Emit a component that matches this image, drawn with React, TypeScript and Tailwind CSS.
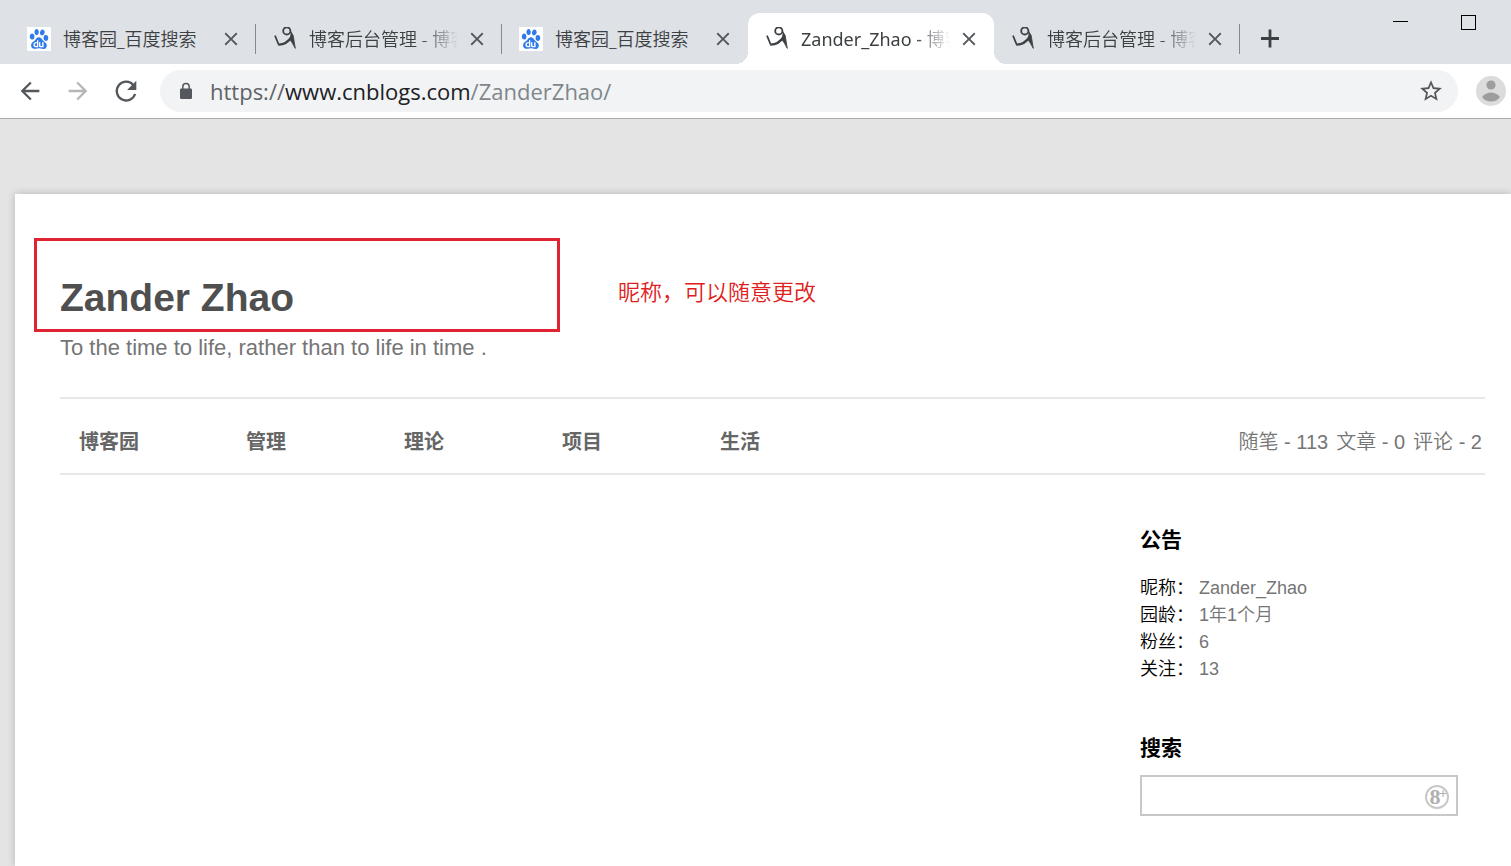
import { MdArrowBack, MdArrowForward, MdClose, MdStarBorder } from "react-icons/md";
import { SiBaidu } from "react-icons/si";

type Tab = { id: number; title: string; site: "baidu" | "cnblogs"; active?: boolean; divider?: boolean };

const tabs: Tab[] = [
  { id: 1, title: "博客园_百度搜索", site: "baidu", divider: true },
  { id: 2, title: "博客后台管理 - 博客园", site: "cnblogs", divider: true },
  { id: 3, title: "博客园_百度搜索", site: "baidu" },
  { id: 4, title: "Zander_Zhao - 博客园", site: "cnblogs", active: true },
  { id: 5, title: "博客后台管理 - 博客园", site: "cnblogs", divider: true },
];

const navLinks = ["博客园", "管理", "理论", "项目", "生活"];

const profile = [
  { label: "昵称", value: "Zander_Zhao" },
  { label: "园龄", value: "1年1个月" },
  { label: "粉丝", value: "6" },
  { label: "关注", value: "13" },
];

function BaiduIcon() {
  return (
    <span className="flex size-6 shrink-0 items-center justify-center bg-white text-[#2f7bea]">
      <SiBaidu className="size-5" />
    </span>
  );
}

function CnblogsIcon() {
  return (
    <svg viewBox="-1 0 24 24" className="size-6 shrink-0" fill="none" stroke="#3c4043" aria-hidden="true">
      <circle cx="12.800" cy="3.900" r="3.600" strokeWidth="1.800" />
      <path d="M1 8.600 4.600 17.400" strokeWidth="1.700" />
      <path d="M4.200 17.600C9.500 17.800 13.500 16 17.600 10" strokeWidth="2.300" />
      <path d="M16.400 4C17.200 6 17 7.500 16.600 9.400L16 12.600 18.600 16.600 21.300 21.400 19.200 8.400Z" fill="#3c4043" strokeWidth="0.800" />
    </svg>
  );
}

function BrowserTab({ tab }: { tab: Tab }) {
  return (
    <div
      className={
        tab.active
          ? "relative flex h-[51px] w-[246px] shrink-0 items-center rounded-t-xl bg-white pr-[14px] pl-[17px] font-normal"
          : "relative flex h-[51px] w-[246px] shrink-0 items-center pr-[14px] pl-[17px] font-[350]"
      }
    >
      {tab.active && (
        <>
          <span className="absolute bottom-0 -left-3 size-3 bg-[radial-gradient(circle_at_top_left,transparent_12px,white_12px)]" />
          <span className="absolute -right-3 bottom-0 size-3 bg-[radial-gradient(circle_at_top_right,transparent_12px,white_12px)]" />
        </>
      )}
      {tab.site === "baidu" ? <BaiduIcon /> : <CnblogsIcon />}
      <span className="ml-3 min-w-0 flex-1 overflow-hidden text-lg whitespace-nowrap text-[#3c4043]">
        <span className={tab.site === "baidu" ? "block" : "block overflow-hidden [mask-image:linear-gradient(to_right,black_76%,transparent)]"}>
          {tab.title}
        </span>
      </span>
      <button type="button" aria-label="关闭标签页" className="ml-2 flex size-[22px] items-center justify-center text-[#54585c]">
        <MdClose className="size-[22px]" />
      </button>
      {tab.divider && <span className="absolute right-0 h-[30px] w-px bg-[#85898d]" />}
    </div>
  );
}

function TitleBar() {
  return (
    <div className="flex h-16 items-end overflow-hidden bg-[#dee1e6] pl-[10px]">
      {tabs.map((tab) => (
        <BrowserTab key={tab.id} tab={tab} />
      ))}
      <button type="button" aria-label="新标签页" className="ml-[14px] flex h-[51px] w-8 items-center justify-center text-[#3c4043]">
        <svg viewBox="0 0 28 28" className="size-7" aria-hidden="true">
          <path d="M5 13.500H23M14 4.500V22.500" stroke="currentColor" strokeWidth="2.800" />
        </svg>
      </button>
      <div className="ml-auto flex self-start pt-[14px] pr-[35px]">
        <button type="button" aria-label="最小化" className="mr-[53px] flex h-[15px] w-[15px] items-center">
          <span className="h-px w-full bg-black" />
        </button>
        <button type="button" aria-label="最大化" className="mt-px size-[15px] border border-black" />
      </div>
    </div>
  );
}

function Toolbar() {
  return (
    <div className="flex h-[55px] items-center border-b border-[#a9adab] bg-white pl-4 text-[#54585c]">
      <button type="button" aria-label="后退">
        <MdArrowBack className="size-7" />
      </button>
      <button type="button" aria-label="前进" className="ml-5 text-[#b4b6b8]">
        <MdArrowForward className="size-7" />
      </button>
      <button type="button" aria-label="重新加载" className="ml-5">
        <svg viewBox="0 0 28 28" className="size-7" aria-hidden="true">
          <path d="M21.500 8.200A9.400 9.400 0 1 0 23.100 17" fill="none" stroke="currentColor" strokeWidth="2.300" />
          <path d="M24.300 3.800V13H15.100Z" fill="currentColor" />
        </svg>
      </button>
      <div className="ml-5 flex h-[42px] flex-1 items-center rounded-full bg-[#f1f3f4] pr-[14px] pl-4">
        <svg viewBox="0 0 20 20" className="size-5" aria-hidden="true">
          <rect x="4" y="7.500" width="12" height="10.500" rx="1.200" fill="currentColor" />
          <path d="M6.800 8V5.700a3.200 3.200 0 0 1 6.400 0V8" fill="none" stroke="currentColor" strokeWidth="1.500" />
        </svg>
        <a
          href="https://www.cnblogs.com/ZanderZhao/"
          className="ml-[14px] flex-1 font-['Open_Sans',sans-serif] text-[22px] leading-7 font-normal text-[#80868b]"
        >
          <span className="text-[#5f6368]">https://</span>
          <span className="text-[#202124]">www.cnblogs.com</span>/ZanderZhao/
        </a>
        <button type="button" aria-label="为此网页添加书签">
          <MdStarBorder className="size-[26px]" />
        </button>
      </div>
      <button type="button" aria-label="用户" className="mr-[5px] ml-[18px]">
        <svg viewBox="0 0 30 30" className="size-[30px]">
          <circle cx="15" cy="15" r="15" fill="#dcdcdc" />
          <circle cx="15" cy="9" r="4.6" fill="#9d9d9d" />
          <path d="M6 21C8 18 12 16.4 15 16.4S22 18 24 21C22 24.2 18.500 25.600 15 25.600S8 24.200 6 21Z" fill="#9d9d9d" />
        </svg>
      </button>
    </div>
  );
}

function BlogHeader() {
  return (
    <header className="relative pt-20 pb-[33px]">
      <h1 className="text-[39px] leading-[47px] font-bold text-[#4f4f4f]">Zander Zhao</h1>
      <p className="mt-[11px] text-[22px] leading-8 text-[#757575]">To the time to life, rather than to life in time .</p>
      <div className="absolute top-11 -left-[26px] h-[94px] w-[526px] border-3 border-[#e02333]" />
      <p className="absolute top-[83px] left-[558px] text-[22px] leading-8 text-[#e02020]">昵称，可以随意更改</p>
    </header>
  );
}

function BlogNav() {
  return (
    <nav className="flex h-[78px] items-center justify-between border-y-2 border-[#e8e8e8] pt-3 pr-[3px] pl-[19px] text-xl text-[#757575]">
      <ul className="flex font-bold text-[#666]">
        {navLinks.map((link) => (
          <li key={link} className="w-[158px] first:w-[167px]">
            <a href="#">{link}</a>
          </li>
        ))}
      </ul>
      <div className="flex gap-2">
        <span>随笔 - 113</span>
        <span>文章 - 0</span>
        <span>评论 - 2</span>
      </div>
    </nav>
  );
}

function Sidebar() {
  return (
    <aside className="mr-[27px] ml-auto w-[318px] pt-[49px]">
      <section>
        <h2 className="text-[21px] leading-8 font-bold text-black">公告</h2>
        <dl className="mt-[19px] text-lg leading-[27px]">
          {profile.map((row) => (
            <div key={row.label} className="flex gap-[5px]">
              <dt className="text-black">{row.label}：</dt>
              <dd className="text-[#757575]">
                <a href="#">{row.value}</a>
              </dd>
            </div>
          ))}
        </dl>
      </section>
      <section className="mt-[49px]">
        <h2 className="text-[21px] leading-8 font-bold text-black">
          <label htmlFor="blog-search">搜索</label>
        </h2>
        <div className="mt-[11px] flex h-[41px] items-center border-2 border-[#c8c8c8] pr-[7px]">
          <input id="blog-search" type="text" className="h-full min-w-0 flex-1 px-2 text-lg outline-none" />
          <button
            type="button"
            aria-label="搜索"
            className="relative mt-[2px] flex size-6 items-center justify-center rounded-full border-2 border-[#c8c8c8] pr-1 font-['Liberation_Serif',serif] text-[22px] leading-none font-bold text-[#b0b0b0]"
          >
            8<span className="absolute top-0 right-0 text-sm leading-none">+</span>
          </button>
        </div>
      </section>
    </aside>
  );
}

export default function App() {
  return (
    <div className="flex min-h-screen flex-col overflow-hidden bg-[#e4e4e4] font-[350]">
      <div className="font-['Noto_Sans','Noto_Sans_CJK_SC',sans-serif]">
        <TitleBar />
        <Toolbar />
      </div>
      <main className="mt-[75px] ml-[15px] flex-1 bg-white pr-[26px] pl-[45px] font-['Liberation_Sans','Noto_Sans_CJK_SC',sans-serif] shadow-[0_0_8px_rgba(0,0,0,0.2)]">
        <BlogHeader />
        <BlogNav />
        <Sidebar />
      </main>
    </div>
  );
}
